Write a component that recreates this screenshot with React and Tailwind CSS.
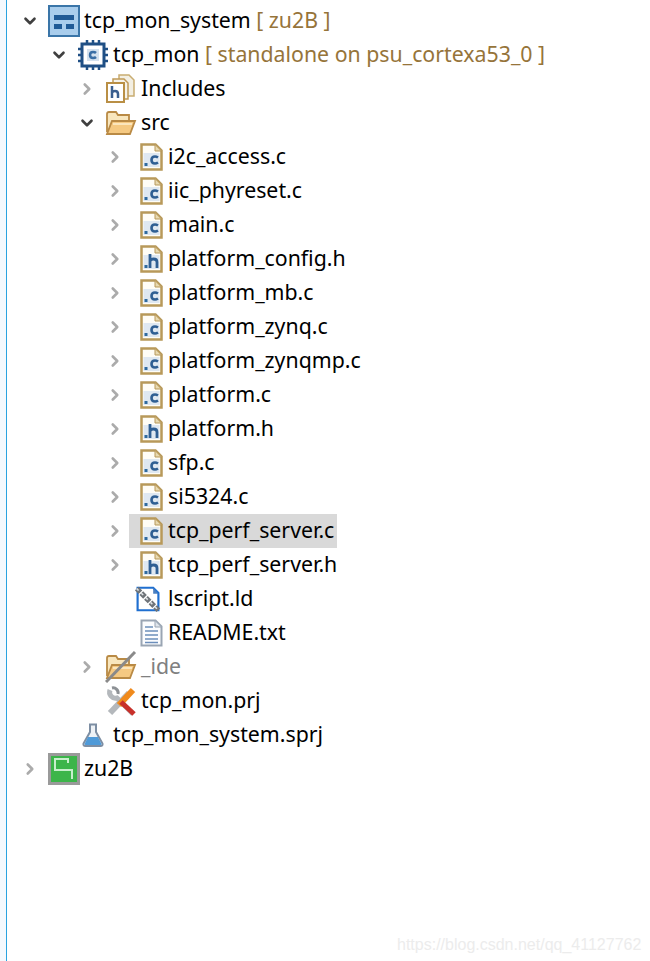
import { ChevronRight, ChevronDown } from "lucide-react";

const Chevron = ({ open }) =>
  open ? (
    <ChevronDown className="w-[22px] h-[22px] text-[#404040]" strokeWidth={3.5} />
  ) : (
    <ChevronRight className="w-[22px] h-[22px] text-[#ababab]" strokeWidth={3.5} />
  );

const SystemIcon = () => (
  <svg width="32" height="32" viewBox="0 0 32 32">
    <rect x="1" y="1" width="30" height="30" fill="#a9cdec" stroke="#3a75a8" strokeWidth="2" />
    <rect x="6" y="10" width="20" height="5" fill="#1f5a96" />
    <rect x="6" y="19" width="8" height="5" fill="#1f5a96" />
    <rect x="18" y="19" width="8" height="5" fill="#1f5a96" />
  </svg>
);

const AppIcon = () => (
  <svg width="32" height="32" viewBox="0 0 32 32">
    <rect x="5" y="5" width="22" height="22" fill="#fff" stroke="#1f4f85" strokeWidth="3" />
    <path d="M10 1v4M16 1v4M22 1v4M10 27v4M16 27v4M22 27v4M1 10h4M1 16h4M1 22h4M27 10h4M27 16h4M27 22h4" stroke="#1f4f85" strokeWidth="2.500" />
    <rect x="10" y="10" width="12" height="12" fill="#d4e1ee" />
    <path d="M19 14q-1-1-3-1-3 0-3 3t3 3q2 0 3-1" fill="none" stroke="#3a6ea5" strokeWidth="2.500" />
  </svg>
);

const Includes = () => (
  <svg width="30" height="30" viewBox="0 0 30 30">
    <path d="M13 1h10l5 5v16H13z" fill="#f3efe3" stroke="#c9ad72" strokeWidth="1.500" />
    <path d="M7 5h11l4 4v16H7z" fill="#f6f3ea" stroke="#c09a58" strokeWidth="1.500" />
    <rect x="1" y="9" width="17" height="19" fill="#fff" stroke="#b98f45" strokeWidth="2" />
    <path d="M6 12v12M6 18.500q1-1.500 3-1.500 3 0 3 3v4" fill="none" stroke="#3b5f8f" strokeWidth="2.500" />
  </svg>
);

const Folder = ({ ghost }) => (
  <svg width="32" height="32" viewBox="0 0 32 32">
    <path d="M2 25V7q0-2 2-2h7l2 3h11v5" fill="#f8e6bd" stroke="#b98a45" strokeWidth="1.800" />
    <path d="M2 27l5-13h23l-5 13z" fill="#f5c982" stroke="#b98a45" strokeWidth="1.800" />
    <path d="M8 17h19" stroke="#fbe6bd" strokeWidth="2" />
    {ghost && <path d="M1 31L30 1" stroke="#8a8a8a" strokeWidth="3" />}
  </svg>
);

const FileIcon = ({ letter }) => (
  <svg width="23" height="28" viewBox="0 0 23 28">
    <path d="M1.500 1.500h14l6 6v19h-20z" fill="#fffdf6" stroke="#b8995a" strokeWidth="2.500" />
    <path d="M15 1.500v6.500h6.500z" fill="#e8d9b0" stroke="#b8995a" strokeWidth="1" />
    <rect x="3.500" y="10" width="16" height="14" fill="#dfe8f1" />
    <rect x="4.500" y="20" width="3" height="3" fill="#2f6a9f" />
    {letter === "c" ? (
      <path d="M18 14.500q-1.500-1-3-1-3.500 0-3.500 3.500t3.500 3.500q1.500 0 3-1" fill="none" stroke="#2f5f93" strokeWidth="2.600" />
    ) : (
      <path d="M10 9v14M10 16q1-2 3.500-2 3.500 0 3.500 3v6" fill="none" stroke="#2f5f93" strokeWidth="2.800" />
    )}
  </svg>
);

const LinkerIcon = () => (
  <svg width="30" height="30" viewBox="0 0 30 30" className="-translate-x-[3px]">
    <path d="M3 2h18l6 6v20H3z" fill="#fff" stroke="#1f6fd0" strokeWidth="2.500" />
    <path d="M21 2v7h6z" fill="#4a7fc0" />
    <path d="M2 3l25 25" stroke="#6f7479" strokeWidth="6" strokeDasharray="6 1.500" />
    <path d="M2 3l25 25" stroke="#dfe3e6" strokeWidth="1.800" strokeDasharray="3 4.500" />
  </svg>
);

const TextIcon = () => (
  <svg width="23" height="28" viewBox="0 0 23 28">
    <path d="M1.500 1.500h14l6 6v19h-20z" fill="#fbfcfe" stroke="#9aa5b3" strokeWidth="2" />
    <path d="M15 1.500v6.500h6.500z" fill="#dfe5ec" stroke="#9aa5b3" strokeWidth="1" />
    <path d="M5 8h8M5 12h13M5 16h13M5 20h13M5 23.500h13" stroke="#6c8ebb" strokeWidth="1.600" />
  </svg>
);

const ToolsIcon = () => (
  <svg width="32" height="32" viewBox="0 0 32 32">
    <path d="M5 28L24 8" stroke="#b4b8bc" strokeWidth="6" />
    <path d="M5 5a6 6 0 0 0 7 8l16 16" fill="none" stroke="#b4b8bc" strokeWidth="5" />
    <path d="M7 3a5 5 0 0 1 6 6" fill="none" stroke="#8d9195" strokeWidth="3" />
    <path d="M14 20L28 5" stroke="#f08a1c" strokeWidth="6" />
    <path d="M16 17l13 12" stroke="#c8302a" strokeWidth="5" />
  </svg>
);

const FlaskIcon = () => (
  <svg width="22" height="24" viewBox="0 0 22 24">
    <path d="M7 1.500h8M8 2v7L1.500 20.500q-.5 2.500 2 2.500h15q2.500 0 2-2.500L14 9V2" fill="#eef2f6" stroke="#7d8ea3" strokeWidth="2" />
    <path d="M6 14h10l3.500 7q0 1-1 1h-15q-1 0-1-1z" fill="#4f9ad8" />
  </svg>
);

const BoardIcon = () => (
  <svg width="32" height="32" viewBox="0 0 32 32">
    <rect x="1.500" y="1.500" width="29" height="29" fill="#3cb54a" stroke="#9a9a9a" strokeWidth="3" />
    <path d="M20 10V6H7v11h17v9" fill="none" stroke="#c8efcc" strokeWidth="2" />
  </svg>
);

const Tree = ({ level, chevron, icon, selected, children }) => {
  const indent = ["pl-[21px]", "pl-[50px]", "pl-[78px]", "pl-[106px]"][level];
  return (
    <div className={`flex items-center h-[34px] ${indent}`}>
      <span className="w-[18px] flex justify-center shrink-0">{chevron !== undefined && <Chevron open={chevron} />}</span>
      <span className={`flex items-center h-[34px] pr-[3px] ${level === 3 ? "pl-[9px] ml-[5px]" : "pl-[9px]"} ${selected ? "bg-[#d9d9d9]" : ""}`}>
        <span className={`flex justify-center items-center shrink-0 ${level === 3 ? "w-[26px] mr-[4px]" : "w-[32px] mr-[4px]"} `}>{icon}</span>
        <span className="whitespace-nowrap pb-[2px]">{children}</span>
      </span>
    </div>
  );
};

const files = [
  ["i2c_access.c", "c"],
  ["iic_phyreset.c", "c"],
  ["main.c", "c"],
  ["platform_config.h", "h"],
  ["platform_mb.c", "c"],
  ["platform_zynq.c", "c"],
  ["platform_zynqmp.c", "c"],
  ["platform.c", "c"],
  ["platform.h", "h"],
  ["sfp.c", "c"],
  ["si5324.c", "c"],
  ["tcp_perf_server.c", "c"],
  ["tcp_perf_server.h", "h"],
];

export default function App() {
  return (
    <div className="relative h-[961px] w-[650px] bg-white overflow-hidden flex font-['Noto_Sans',sans-serif] text-[21.3px] text-black">
      <div className="w-[6px] bg-[#f4f9fe] shrink-0" />
      <div className="w-px bg-[#2aa3e0] shrink-0" />
      <div className="-ml-[7px] pt-[4px] flex-1">
        <Tree level={0} chevron={true} icon={<SystemIcon />}>
          tcp_mon_system <span className="text-[#96743a]">[ zu2B ]</span>
        </Tree>
        <Tree level={1} chevron={true} icon={<AppIcon />}>
          tcp_mon <span className="text-[#96743a]">[ standalone on psu_cortexa53_0 ]</span>
        </Tree>
        <Tree level={2} chevron={false} icon={<Includes />}>Includes</Tree>
        <Tree level={2} chevron={true} icon={<Folder />}>src</Tree>
        {files.map(([name, kind]) => (
          <Tree key={name} level={3} chevron={false} selected={name === "tcp_perf_server.c"} icon={<FileIcon letter={kind} />}>
            {name}
          </Tree>
        ))}
        <Tree level={3} icon={<LinkerIcon />}>lscript.ld</Tree>
        <Tree level={3} icon={<TextIcon />}>README.txt</Tree>
        <Tree level={2} chevron={false} icon={<Folder ghost />}>
          <span className="text-[#808080]">_ide</span>
        </Tree>
        <Tree level={2} icon={<ToolsIcon />}>tcp_mon.prj</Tree>
        <Tree level={1} icon={<FlaskIcon />}>tcp_mon_system.sprj</Tree>
        <Tree level={0} chevron={false} icon={<BoardIcon />}>zu2B</Tree>
      </div>
      <span className="absolute left-[397px] top-[933px] text-[16px] text-[#ececec] font-['Liberation_Sans',sans-serif]">
        https://blog.csdn.net/qq_41127762
      </span>
    </div>
  );
}
